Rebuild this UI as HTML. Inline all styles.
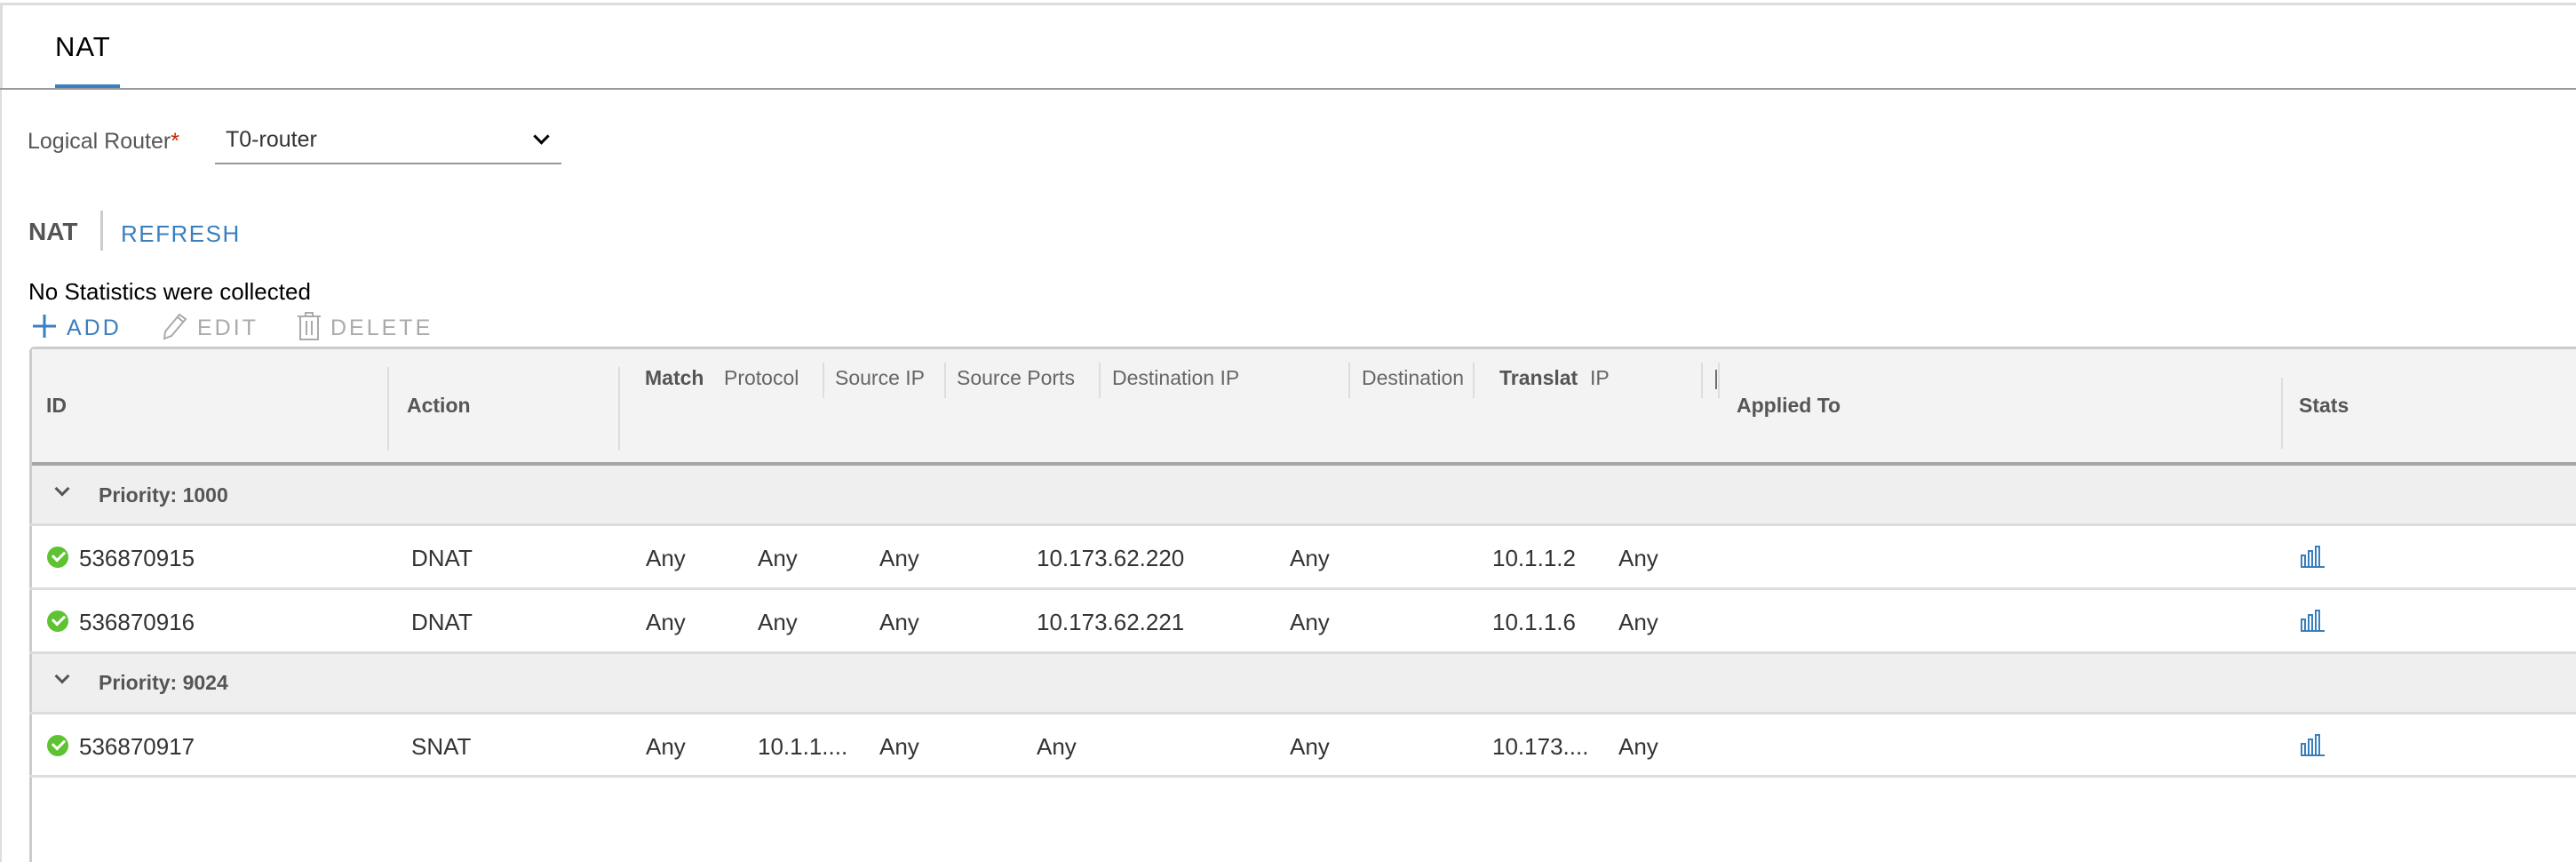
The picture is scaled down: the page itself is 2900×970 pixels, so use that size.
<!DOCTYPE html>
<html><head><meta charset="utf-8"><style>
*{margin:0;padding:0;box-sizing:border-box}
body{width:2900px;height:970px;background:#fff;position:relative;overflow:hidden;font-family:"Liberation Sans",sans-serif;color:#333}
.a{position:absolute;white-space:nowrap}
.h{font-size:23px;color:#666}
.hb{font-size:23px;color:#555;font-weight:bold}
.d{font-size:26px;color:#333}
.vl{position:absolute;width:2px;background:#ddd}
.hl{position:absolute;left:33px;right:0;height:3px;background:#dcdcdc}
.chk{position:absolute;left:53px;width:24px;height:24px;border-radius:50%;background:#5fc232}
.chk:after{content:"";position:absolute;left:6px;top:5px;width:11px;height:6px;border-left:3px solid #fff;border-bottom:3px solid #fff;transform:rotate(-45deg)}
.chev{position:absolute;left:64px;width:12px;height:12px;border-right:3px solid #555;border-bottom:3px solid #555;transform:rotate(45deg)}
</style></head><body>
<div class="a" style="left:0;top:3px;width:2900px;height:3px;background:#ddd"></div>
<div class="a" style="left:0;top:3px;width:3px;height:97px;background:#ddd"></div>
<div class="a" style="left:62px;top:35px;font-size:31px;color:#000;letter-spacing:1px">NAT</div>
<div class="a" style="left:62px;top:95px;width:73px;height:5px;background:#3880c0"></div>
<div class="a" style="left:0;top:99px;width:2900px;height:2px;background:#999"></div>
<div class="a" style="left:0;top:101px;width:2px;height:869px;background:#ddd"></div>

<div class="a" style="left:31px;top:145px;font-size:25px;color:#565656">Logical Router<span style="color:#c92100">*</span></div>
<div class="a" style="left:254px;top:143px;font-size:25px;color:#333">T0-router</div>
<div class="a" style="left:603px;top:147px;width:13px;height:13px;border-right:3px solid #000;border-bottom:3px solid #000;transform:rotate(45deg)"></div>
<div class="a" style="left:242px;top:183px;width:390px;height:2px;background:#999"></div>

<div class="a" style="left:32px;top:245px;font-size:28px;color:#555;font-weight:bold">NAT</div>
<div class="a" style="left:113px;top:237px;width:3px;height:45px;background:#ccc"></div>
<div class="a" style="left:136px;top:248px;font-size:26px;color:#3a7fbd;letter-spacing:1.5px">REFRESH</div>

<div class="a" style="left:32px;top:313px;font-size:26px;color:#000">No Statistics were collected</div>

<svg class="a" style="left:36px;top:353px" width="28" height="28"><path d="M14 1V27M1 14H27" stroke="#3a7fbd" stroke-width="3"/></svg>
<div class="a" style="left:75px;top:355px;font-size:25px;color:#3a7fbd;letter-spacing:3px">ADD</div>
<svg class="a" style="left:182px;top:351px" width="30" height="32"><path d="M3 30L4 22L20 3L27 8L11 27Z M18 6L24 11" fill="none" stroke="#aaa" stroke-width="2"/></svg>
<div class="a" style="left:222px;top:355px;font-size:25px;color:#aaa;letter-spacing:3px">EDIT</div>
<svg class="a" style="left:334px;top:350px" width="28" height="34"><path d="M1 6H27M10 6V2H18V6M4 6V32H24V6M11 11V27M17 11V27" fill="none" stroke="#aaa" stroke-width="2"/></svg>
<div class="a" style="left:372px;top:355px;font-size:25px;color:#aaa;letter-spacing:3px">DELETE</div>

<div class="a" style="left:33px;top:390px;width:2867px;height:580px;border-left:3px solid #ccc;border-top:3px solid #ccc;border-top-left-radius:6px"></div>
<div class="a" style="left:36px;top:393px;width:2864px;height:129px;background:#f3f3f3"></div>
<div class="a" style="left:36px;top:520px;width:2864px;height:4px;background:#a5a5a5"></div>
<div class="vl" style="left:436px;top:413px;height:94px"></div>
<div class="vl" style="left:696px;top:413px;height:94px"></div>
<div class="vl" style="left:926px;top:408px;height:40px"></div>
<div class="vl" style="left:1063px;top:408px;height:40px"></div>
<div class="vl" style="left:1237px;top:408px;height:40px"></div>
<div class="vl" style="left:1518px;top:408px;height:40px"></div>
<div class="vl" style="left:1658px;top:408px;height:40px"></div>
<div class="vl" style="left:1915px;top:408px;height:40px"></div>
<div class="vl" style="left:1934px;top:408px;height:40px"></div>
<div class="vl" style="left:2568px;top:425px;height:80px"></div>
<div class="a hb" style="left:52px;top:443px">ID</div>
<div class="a hb" style="left:458px;top:443px">Action</div>
<div class="a hb" style="left:726px;top:412px">Match</div>
<div class="a h" style="left:815px;top:412px">Protocol</div>
<div class="a h" style="left:940px;top:412px">Source IP</div>
<div class="a h" style="left:1077px;top:412px">Source Ports</div>
<div class="a h" style="left:1252px;top:412px">Destination IP</div>
<div class="a h" style="left:1533px;top:412px;width:124px;overflow:hidden">Destination</div>
<div class="a hb" style="left:1688px;top:412px;width:92px;overflow:hidden">Translat</div>
<div class="a h" style="left:1790px;top:412px">IP</div>
<div class="a h" style="left:1929px;top:412px">|</div>
<div class="a hb" style="left:1955px;top:443px">Applied To</div>
<div class="a hb" style="left:2588px;top:443px">Stats</div>

<div class="a" style="left:36px;top:524px;width:2864px;height:66px;background:#efefef"></div>
<div class="chev" style="top:544px"></div>
<div class="a hb" style="left:111px;top:544px">Priority: 1000</div>
<div class="hl" style="top:589px"></div>
<div class="chk" style="top:615px"></div>
<div class="a d" style="left:89px;top:613px">536870915</div>
<div class="a d" style="left:463px;top:613px">DNAT</div>
<div class="a d" style="left:727px;top:613px">Any</div>
<div class="a d" style="left:853px;top:613px">Any</div>
<div class="a d" style="left:990px;top:613px">Any</div>
<div class="a d" style="left:1167px;top:613px">10.173.62.220</div>
<div class="a d" style="left:1452px;top:613px">Any</div>
<div class="a d" style="left:1680px;top:613px">10.1.1.2</div>
<div class="a d" style="left:1822px;top:613px">Any</div>
<svg class="a" style="left:2588px;top:613px" width="30" height="26"><path d="M2 25H29M3 24V12H7V24M11 24V7H15V24M19 24V2H23V24" fill="none" stroke="#3a7fbd" stroke-width="2"/></svg>
<div class="hl" style="top:661px"></div>
<div class="chk" style="top:687px"></div>
<div class="a d" style="left:89px;top:685px">536870916</div>
<div class="a d" style="left:463px;top:685px">DNAT</div>
<div class="a d" style="left:727px;top:685px">Any</div>
<div class="a d" style="left:853px;top:685px">Any</div>
<div class="a d" style="left:990px;top:685px">Any</div>
<div class="a d" style="left:1167px;top:685px">10.173.62.221</div>
<div class="a d" style="left:1452px;top:685px">Any</div>
<div class="a d" style="left:1680px;top:685px">10.1.1.6</div>
<div class="a d" style="left:1822px;top:685px">Any</div>
<svg class="a" style="left:2588px;top:685px" width="30" height="26"><path d="M2 25H29M3 24V12H7V24M11 24V7H15V24M19 24V2H23V24" fill="none" stroke="#3a7fbd" stroke-width="2"/></svg>
<div class="hl" style="top:733px"></div>
<div class="a" style="left:36px;top:736px;width:2864px;height:66px;background:#efefef"></div>
<div class="chev" style="top:755px"></div>
<div class="a hb" style="left:111px;top:755px">Priority: 9024</div>
<div class="hl" style="top:801px"></div>
<div class="chk" style="top:827px"></div>
<div class="a d" style="left:89px;top:825px">536870917</div>
<div class="a d" style="left:463px;top:825px">SNAT</div>
<div class="a d" style="left:727px;top:825px">Any</div>
<div class="a d" style="left:853px;top:825px">10.1.1....</div>
<div class="a d" style="left:990px;top:825px">Any</div>
<div class="a d" style="left:1167px;top:825px">Any</div>
<div class="a d" style="left:1452px;top:825px">Any</div>
<div class="a d" style="left:1680px;top:825px">10.173....</div>
<div class="a d" style="left:1822px;top:825px">Any</div>
<svg class="a" style="left:2588px;top:825px" width="30" height="26"><path d="M2 25H29M3 24V12H7V24M11 24V7H15V24M19 24V2H23V24" fill="none" stroke="#3a7fbd" stroke-width="2"/></svg>
<div class="hl" style="top:872px"></div>
</body></html>
